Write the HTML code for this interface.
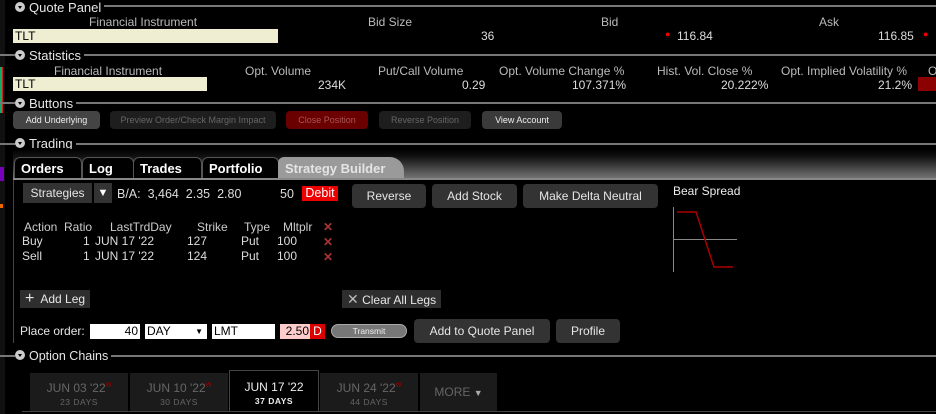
<!DOCTYPE html>
<html><head><meta charset="utf-8"><style>
*{margin:0;padding:0;box-sizing:border-box}
body{width:936px;height:414px;background:#000;color:#ddd;font-family:"Liberation Sans",sans-serif;font-size:12px;position:relative;overflow:hidden}
.a{position:absolute;white-space:nowrap}
.hl{position:absolute;height:2px;background:#777}
.hd{position:absolute;font-size:13px;color:#e6e6e6}
.tri{display:inline-block;width:10px;height:10px;border-radius:50%;background:#ccc;position:relative;margin-right:4px;top:0}
.tri:after{content:"";position:absolute;left:2.5px;top:3.5px;border-left:2.5px solid transparent;border-right:2.5px solid transparent;border-top:3px solid #000}
.lab{color:#bbb}
.inp{position:absolute;background:#efedd2;color:#000;padding-left:2px;line-height:14px}
.btn{position:absolute;border-radius:4px;text-align:center;font-size:9px;line-height:18px;color:#aaa}
.b2{position:absolute;background:#333;border-radius:4px;text-align:center;color:#e6e6e6;font-size:12px}
.tab{position:absolute;top:157px;height:22px;background:#000;border:1px solid #555;border-bottom:none;border-radius:6px 6px 0 0;color:#fff;font-weight:bold;font-size:13px;line-height:21px;padding-left:6px}
.x{color:#a33;font-weight:bold}
.dt{position:absolute;top:373px;height:38px;background:#1b1b1b;text-align:center;color:#666;font-size:12px;line-height:14px;padding-top:6px}
.dt small{display:block;font-size:8.5px;letter-spacing:.5px}
.dt sup{color:#a00;font-size:6px}
</style></head><body>
<div class="a" style="left:0;top:0;width:5px;height:414px;background:#111"></div>
<div class="a" style="left:0;top:67px;width:2px;height:46px;background:#1a6"></div>
<div class="a" style="left:2px;top:67px;width:1px;height:46px;background:#c22"></div>
<div class="a" style="left:0;top:167px;width:4px;height:14px;background:#70b"></div>
<div class="a" style="left:0;top:204px;width:3px;height:4px;background:#e60"></div>

<div class="hd" style="left:15px;top:0px"><span class="tri"></span>Quote Panel</div>
<div class="hl" style="left:104px;right:0;top:5px"></div>
<div class="a lab" style="left:89px;top:15px">Financial Instrument</div>
<div class="a lab" style="left:368px;top:15px">Bid Size</div>
<div class="a lab" style="left:601px;top:15px">Bid</div>
<div class="a lab" style="left:819px;top:15px">Ask</div>
<div class="inp" style="left:13px;top:29px;width:265px;height:14px">TLT</div>
<div class="a" style="left:481px;top:29px">36</div>
<div class="a" style="left:665px;top:29px;color:#e00;font-size:9px">●</div>
<div class="a" style="left:677px;top:29px">116.84</div>
<div class="a" style="left:878px;top:29px">116.85</div>
<div class="a" style="left:923px;top:29px;color:#e00;font-size:9px">●</div>
<div class="hl" style="left:0;right:0;top:54px"></div>

<div class="hd" style="left:15px;top:48px;background:#000;padding-right:3px"><span class="tri"></span>Statistics</div>
<div class="a lab" style="left:54px;top:64px">Financial Instrument</div>
<div class="a lab" style="left:245px;top:64px">Opt. Volume</div>
<div class="a lab" style="left:378px;top:64px">Put/Call Volume</div>
<div class="a lab" style="left:499px;top:64px">Opt. Volume Change %</div>
<div class="a lab" style="left:657px;top:64px">Hist. Vol. Close %</div>
<div class="a lab" style="left:781px;top:64px">Opt. Implied Volatility %</div>
<div class="a lab" style="left:928px;top:64px">O</div>
<div class="inp" style="left:13px;top:77px;width:194px;height:14px">TLT</div>
<div class="a" style="left:318px;top:78px">234K</div>
<div class="a" style="left:462px;top:78px">0.29</div>
<div class="a" style="left:572px;top:78px">107.371%</div>
<div class="a" style="left:721px;top:78px">20.222%</div>
<div class="a" style="left:878px;top:78px">21.2%</div>
<div class="a" style="left:918px;top:77px;width:18px;height:14px;background:#8b0000"></div>
<div class="hl" style="left:0;right:0;top:102px"></div>

<div class="hd" style="left:15px;top:96px;background:#000;padding-right:3px"><span class="tri"></span>Buttons</div>
<div class="btn" style="left:13px;top:111px;width:87px;height:18px;background:#444;color:#eee">Add Underlying</div>
<div class="btn" style="left:110px;top:111px;width:166px;height:18px;background:#1e1e1e;color:#666">Preview Order/Check Margin Impact</div>
<div class="btn" style="left:286px;top:111px;width:82px;height:18px;background:#6a0000;color:#a55">Close Position</div>
<div class="btn" style="left:379px;top:111px;width:92px;height:18px;background:#1e1e1e;color:#666">Reverse Position</div>
<div class="btn" style="left:482px;top:111px;width:80px;height:18px;background:#3a3a3a;color:#eee">View Account</div>
<div class="hl" style="left:0;right:0;top:143px"></div>

<div class="hd" style="left:15px;top:136px;background:#000;padding-right:3px"><span class="tri"></span>Trading</div>
<div class="a" style="left:13px;top:149px;width:923px;height:30px;background:linear-gradient(#000,#111 25%,#777)"></div>
<div class="tab" style="left:14px;width:68px">Orders</div>
<div class="tab" style="left:82px;width:52px">Log</div>
<div class="tab" style="left:133px;width:69px">Trades</div>
<div class="tab" style="left:202px;width:77px">Portfolio</div>
<div class="tab" style="left:278px;width:126px;background:#9a9a9a;border-color:#999;color:#e4e4e4;border-radius:6px 14px 0 0">Strategy Builder</div>
<div class="a" style="left:13px;right:0;top:178px;height:2px;background:#888"></div>
<div class="a" style="left:13px;top:180px;width:1px;height:163px;background:#444"></div>

<div class="b2" style="left:23px;top:183px;width:69px;height:20px;line-height:20px;border-radius:0;background:#333">Strategies</div>
<div class="b2" style="left:94px;top:183px;width:18px;height:20px;line-height:20px;border-radius:0;font-size:11px;color:#fff">▼</div>
<div class="a" style="left:117px;top:187px;font-size:12.5px">B/A:&nbsp;&nbsp;3,464&nbsp;&nbsp;2.35&nbsp;&nbsp;2.80</div>
<div class="a" style="left:280px;top:187px;font-size:12.5px">50</div>
<div class="a" style="left:302px;top:186px;width:36px;height:15px;background:#e00;color:#fff;font-size:12.5px;line-height:15px;text-align:center">Debit</div>
<div class="b2" style="left:352px;top:184px;width:74px;height:24px;line-height:24px">Reverse</div>
<div class="b2" style="left:432px;top:184px;width:85px;height:24px;line-height:24px">Add Stock</div>
<div class="b2" style="left:523px;top:184px;width:135px;height:24px;line-height:24px">Make Delta Neutral</div>
<div class="a" style="left:673px;top:184px;color:#eee">Bear Spread</div>
<svg class="a" style="left:670px;top:205px" width="80" height="70">
<line x1="3.5" y1="2" x2="3.5" y2="67" stroke="#888"/>
<line x1="3" y1="34.5" x2="67" y2="34.5" stroke="#888"/>
<polyline points="7,7 26,7 44,62 63,62" fill="none" stroke="#a00" stroke-width="1.5"/>
</svg>

<div class="a lab" style="left:24px;top:220px;color:#ccc">Action&nbsp;&nbsp;Ratio</div>
<div class="a lab" style="left:110px;top:220px;color:#ccc">LastTrdDay</div>
<div class="a lab" style="left:197px;top:220px;color:#ccc">Strike</div>
<div class="a lab" style="left:244px;top:220px;color:#ccc">Type</div>
<div class="a lab" style="left:283px;top:220px;color:#ccc">Mltplr</div>
<div class="a x" style="left:323px;top:220px">✕</div>
<div class="a" style="left:22px;top:234px">Buy</div><div class="a" style="left:83px;top:234px">1</div><div class="a" style="left:95px;top:234px">JUN 17 '22</div><div class="a" style="left:187px;top:234px">127</div><div class="a" style="left:241px;top:234px">Put</div><div class="a" style="left:277px;top:234px">100</div><div class="a x" style="left:323px;top:235px">✕</div>
<div class="a" style="left:22px;top:249px">Sell</div><div class="a" style="left:83px;top:249px">1</div><div class="a" style="left:95px;top:249px">JUN 17 '22</div><div class="a" style="left:187px;top:249px">124</div><div class="a" style="left:241px;top:249px">Put</div><div class="a" style="left:277px;top:249px">100</div><div class="a x" style="left:323px;top:250px">✕</div>

<div class="a" style="left:20px;top:290px;width:70px;height:18px;background:#2e2e2e;color:#e6e6e6;line-height:18px;padding-left:5px"><span style="font-size:16px">+</span>&nbsp; Add Leg</div>
<div class="a" style="left:342px;top:290px;width:99px;height:18px;background:#2e2e2e;color:#e6e6e6;line-height:18px;padding-left:5px"><span style="color:#bbb;font-size:14px">✕</span> Clear All Legs</div>

<div class="a" style="left:20px;top:324px;color:#e6e6e6">Place order:</div>
<div class="a" style="left:90px;top:324px;width:50px;height:15px;background:#fff;color:#000;text-align:right;padding-right:2px;line-height:15px">40</div>
<div class="a" style="left:145px;top:324px;width:62px;height:15px;background:#fff;color:#000;padding-left:2px;line-height:15px">DAY<span style="position:absolute;right:4px;font-size:8px">▼</span></div>
<div class="a" style="left:212px;top:324px;width:63px;height:15px;background:#fff;color:#000;padding-left:2px;line-height:15px">LMT</div>
<div class="a" style="left:280px;top:324px;width:30px;height:15px;background:#fcc;color:#000;text-align:right;padding-right:1px;line-height:15px">2.50</div>
<div class="a" style="left:310px;top:324px;width:15px;height:15px;background:#d00;color:#fff;text-align:center;line-height:15px">D</div>
<div class="a" style="left:331px;top:324px;width:76px;height:14px;background:#777;border:1px solid #aaa;border-radius:7px;color:#eee;font-size:8.5px;text-align:center;line-height:12px">Transmit</div>
<div class="b2" style="left:414px;top:319px;width:136px;height:24px;line-height:24px">Add to Quote Panel</div>
<div class="b2" style="left:556px;top:319px;width:64px;height:24px;line-height:24px">Profile</div>

<div class="hl" style="left:0;right:0;top:355px"></div>
<div class="hd" style="left:15px;top:349px;background:#000;padding-right:3px;font-size:12.5px"><span class="tri"></span>Option Chains</div>

<div class="dt" style="left:30px;width:98px">JUN 03 '22<sup>W</sup><small>23 DAYS</small></div>
<div class="dt" style="left:130px;width:98px">JUN 10 '22<sup>W</sup><small>30 DAYS</small></div>
<div class="dt" style="left:229px;width:90px;background:#000;border:1px solid #444;border-bottom:none;color:#eee;top:370px;height:41px;padding-top:9px">JUN 17 '22<small style="font-weight:bold">37 DAYS</small></div>
<div class="dt" style="left:320px;width:98px">JUN 24 '22<sup>W</sup><small>44 DAYS</small></div>
<div class="dt" style="left:420px;width:77px;line-height:26px;padding-top:6px">MORE <span style="color:#aaa;font-size:9px">▼</span></div>
<div class="a" style="left:22px;top:411px;width:914px;height:1px;background:#444"></div>
</body></html>
